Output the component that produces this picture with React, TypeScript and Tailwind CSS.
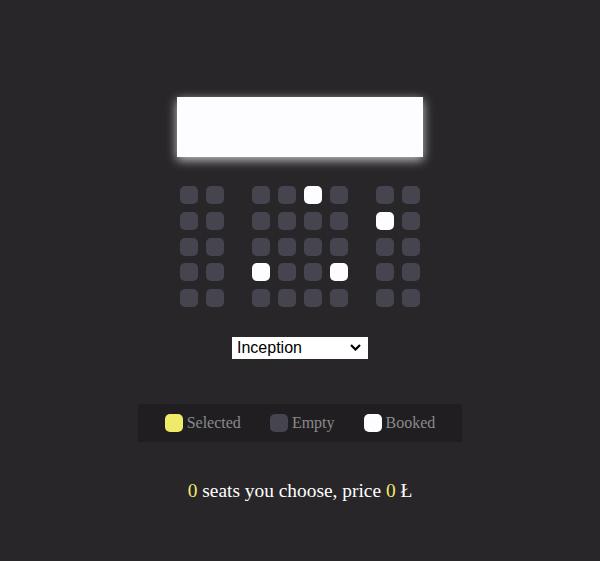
import React, { useState } from 'react';

const movies = [
  { title: 'Inception', price: 10 },
  { title: 'Interstellar', price: 12 },
  { title: 'Tenet', price: 8 },
];

// seats that are already taken, as [row, col]
const booked = ['0-4', '1-6', '3-2', '3-5'];

const Seat: React.FC<{ state: 'empty' | 'booked' | 'selected' }> = ({ state }) => {
  const color =
    state === 'booked' ? 'bg-[#fdfcff]' : state === 'selected' ? 'bg-[#f0ea6a]' : 'bg-[#46444f]';
  return <div className={`w-[18px] h-[18px] rounded-[5px] ${color}`}></div>;
};

const App: React.FC = () => {
  const [movie, setMovie] = useState(movies[0].title);
  const [selected] = useState<string[]>([]);
  const price = movies.find((m) => m.title === movie)?.price ?? 0;

  const rows = [0, 1, 2, 3, 4];
  const groups = [[0, 1], [2, 3, 4, 5], [6, 7]];

  return (
    <div className="min-h-screen bg-[#282629] flex flex-col items-center pt-[97px] font-['Liberation_Serif',serif]">
      {/* Screen */}
      <div className="w-[246px] h-[60px] bg-[#fdfcff] shadow-[0_3px_10px_rgba(255,255,255,0.75)]"></div>

      {/* Seats */}
      <div className="mt-[29px] flex flex-col gap-[7.8px]">
        {rows.map((r) => (
          <div key={r} className="flex gap-[28px]">
            {groups.map((g, gi) => (
              <div key={gi} className="flex gap-2">
                {g.map((c) => {
                  const id = `${r}-${c}`;
                  const state = booked.includes(id) ? 'booked' : selected.includes(id) ? 'selected' : 'empty';
                  return <Seat key={c} state={state} />;
                })}
              </div>
            ))}
          </div>
        ))}
      </div>

      {/* Movie select */}
      <div className="relative mt-[29px] w-[136px] h-[22px]">
        <select
          value={movie}
          onChange={(e) => setMovie(e.target.value)}
          className="appearance-none w-full h-full bg-white text-black pl-[5px] text-[16px] leading-[22px] font-['Liberation_Sans',Arial,sans-serif] outline-none"
        >
          {movies.map((m) => (
            <option key={m.title} value={m.title}>
              {m.title}
            </option>
          ))}
        </select>
        <svg
          className="absolute right-[7px] top-[8px] pointer-events-none"
          width="11"
          height="7"
          viewBox="0 0 11 7"
          fill="none"
          stroke="#000"
          strokeWidth="2.2"
        >
          <path d="M1 1l4.5 4.5L10 1" />
        </svg>
      </div>

      {/* Legend */}
      <div className="mt-[46px] w-[324px] h-[38px] bg-[#201e21] flex items-center justify-center gap-[29px] text-[16px] text-[#8a8a8a]">
        <div className="flex items-center gap-[4px]">
          <Seat state="selected" />
          <span>Selected</span>
        </div>
        <div className="flex items-center gap-[4px]">
          <Seat state="empty" />
          <span>Empty</span>
        </div>
        <div className="flex items-center gap-[4px]">
          <Seat state="booked" />
          <span>Booked</span>
        </div>
      </div>

      {/* Summary */}
      <p className="mt-[34px] text-[19.4px] text-white">
        <span className="text-[#f0ea6a]">{selected.length}</span> seats you choose, price{' '}
        <span className="text-[#f0ea6a]">{selected.length * price}</span> Ł
      </p>
    </div>
  );
};

export default App;
